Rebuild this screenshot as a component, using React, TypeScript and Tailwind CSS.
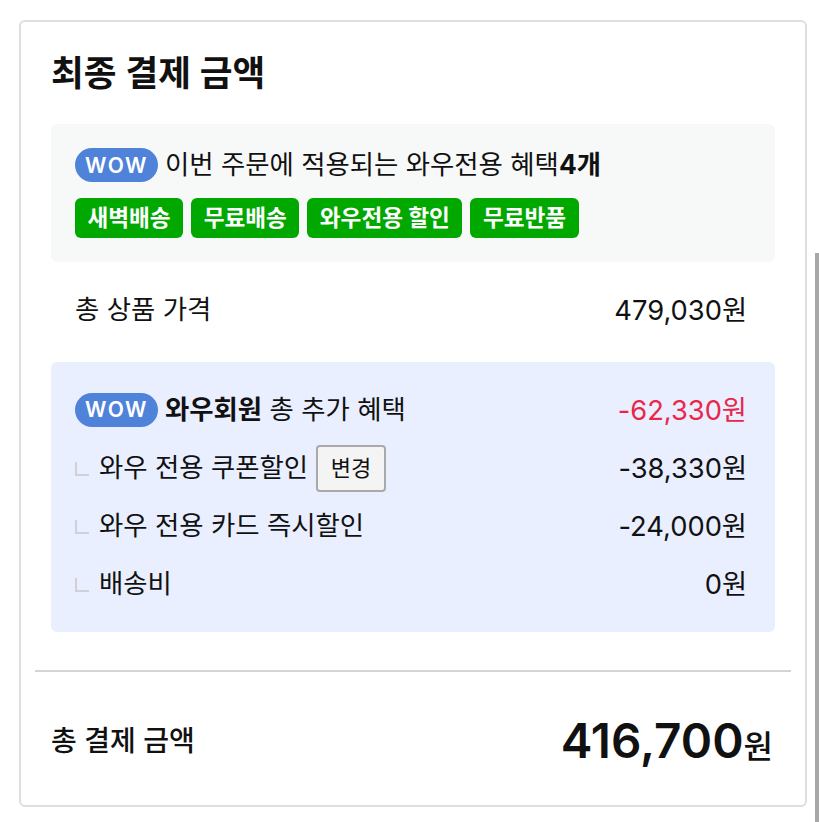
import React from 'react';

const FONT = { fontFamily: '"Inter", "Noto Sans CJK KR", sans-serif' };

const WowBadge = () => (
  <span className="inline-flex h-[34px] w-[83px] shrink-0 items-center justify-center rounded-full bg-[#4f82d9] text-[21px] font-semibold leading-none tracking-[1.5px] text-white">
    WOW
  </span>
);

const Tag = ({ label }: { label: string }) => (
  <span className="flex h-[40px] items-center rounded-[6px] bg-[#00a800] px-[12.5px] text-[22.6px] font-bold text-white">{label}</span>
);

const SubRow = ({ label, price, children }: { label: string; price: string; children?: React.ReactNode }) => (
  <div className="flex h-[58px] items-center justify-between">
    <div className="flex items-center">
      <span className="mr-[10px] mt-[2px] h-[14px] w-[14px] border-b-2 border-l-2 border-[#d0d0d6]" />
      <span>{label}</span>
      {children}
    </div>
    <span className="mt-[2px] text-[27.3px]">{price}</span>
  </div>
);

export default function App() {
  return (
    <div className="relative h-[822px] w-[819px] overflow-hidden bg-white pl-[19px] pt-[20px] text-[#111]" style={FONT}>
      <div className="flex h-[787px] w-[788px] flex-col rounded-[6px] border-2 border-[#dedede] px-[30px] text-[26.4px]">
        <h2 className="mt-[26px] text-[35.6px] font-semibold leading-[52px]">최종 결제 금액</h2>

        <div className="mt-[24px] h-[138px] rounded-[6px] bg-[#f7f9f9] px-[24px] pt-[24px]">
          <div className="flex h-[34px] items-center gap-[7px]">
            <WowBadge />
            <span>이번 주문에 적용되는 와우전용 혜택<b className="font-bold">4개</b></span>
          </div>
          <div className="mt-[16px] flex gap-[8px]">
            <Tag label="새벽배송" />
            <Tag label="무료배송" />
            <Tag label="와우전용 할인" />
            <Tag label="무료반품" />
          </div>
        </div>

        <div className="flex h-[100px] items-center justify-between pb-[4px] pl-[24px] pr-[28px]">
          <span>총 상품 가격</span>
          <span className="mt-[2px] text-[27.3px]">479,030원</span>
        </div>

        <div className="h-[270px] rounded-[6px] bg-[#e9effe] pl-[24px] pr-[28px] pt-[19px]">
          <div className="flex h-[58px] items-center justify-between">
            <div className="flex items-center gap-[7px]">
              <WowBadge />
              <span><b className="font-bold">와우회원</b> 총 추가 혜택</span>
            </div>
            <span className="mt-[2px] text-[27.3px] text-[#e8274b]">-62,330원</span>
          </div>
          <SubRow label="와우 전용 쿠폰할인" price="-38,330원">
            <button className="ml-[8px] h-[47px] w-[70px] rounded-[4px] border-2 border-[#a9a9a9] bg-[#f4f4f4] text-[22px]">변경</button>
          </SubRow>
          <SubRow label="와우 전용 카드 즉시할인" price="-24,000원" />
          <SubRow label="배송비" price="0원" />
        </div>

        <div className="-mx-[16px] mt-[38px] h-[2px] bg-[#d4d4d4]" />

        <div className="flex flex-1 items-center justify-between pr-[2px] pt-[5px]">
          <span className="text-[28px] font-medium">총 결제 금액</span>
          <span className="flex items-baseline text-[32px] font-medium">
            <span className="text-[47.6px] font-semibold">416,700</span>원
          </span>
        </div>
      </div>
      {/* overlay scrollbar */}
      <div className="absolute bottom-0 right-0 top-[253px] w-[4px] bg-[#a8a8a8]" />
    </div>
  );
}
